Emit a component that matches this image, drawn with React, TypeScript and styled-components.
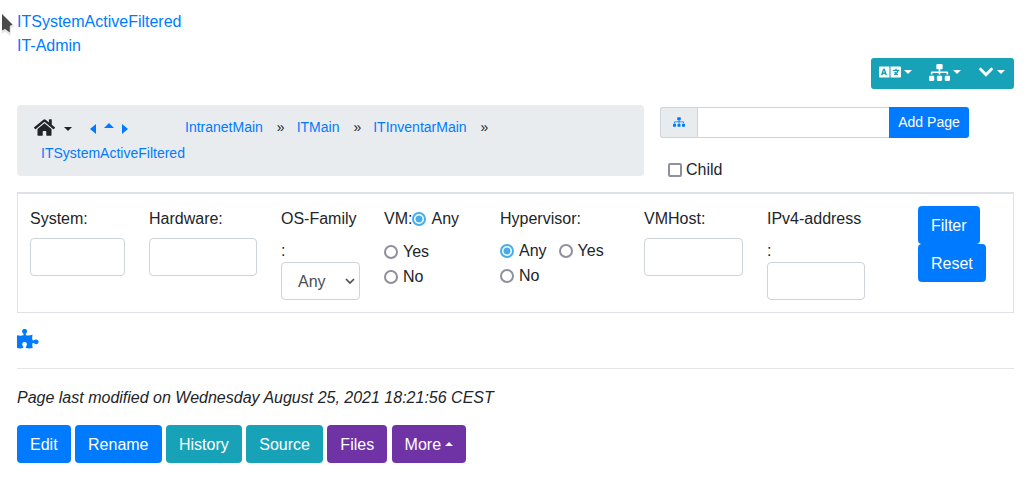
import React from 'react';
import styled, { createGlobalStyle } from 'styled-components';
import { FaChevronDown, FaHome, FaLanguage, FaSitemap } from 'react-icons/fa';

const GlobalStyle = createGlobalStyle`
  *, *::before, *::after { box-sizing: border-box; }
  body {
    margin: 0;
    background: #fff;
    color: #212529;
    font: 16px/24px "Liberation Sans", Arial, sans-serif;
  }
  button, input, select { font: inherit; color: inherit; margin: 0; }
  button { cursor: pointer; }
`;

const Page = styled.main`
  padding: 10px 13px 24px 17px;
`;

const Pointer = styled.svg`
  position: absolute;
  left: 0;
  top: 12px;
  width: 16px;
  height: 24px;
  pointer-events: none;
`;

const Link = styled.a`
  color: #007bff;
  text-decoration: none;
`;

const TitleLinks = styled.nav`
  display: flex;
  flex-direction: column;
  align-items: flex-start;
`;

const Toolbar = styled.div`
  display: flex;
  width: fit-content;
  margin: 0 0 16px auto;
  border-radius: 3px;
  background: #17a2b8;
`;

const ToolButton = styled.button`
  display: flex;
  align-items: center;
  gap: 3px;
  height: 31px;
  padding: 0 9px 3px 8px;
  border: 0;
  background: none;
  color: #fff;
`;

type Direction = 'down' | 'up' | 'left' | 'right';

const caretBorders: Record<Direction, string> = {
  down: 'border-width: 4px 4px 0; border-top-color: currentColor;',
  up: 'border-width: 0 4px 4px; border-bottom-color: currentColor;',
  left: 'border-width: 5px 6px 5px 0; border-right-color: currentColor;',
  right: 'border-width: 5px 0 5px 6px; border-left-color: currentColor;',
};

const Caret = styled.span<{ $dir: Direction }>`
  display: inline-block;
  width: 0;
  height: 0;
  border: 0 solid transparent;
  ${(p) => caretBorders[p.$dir]}
`;

const WideUpCaret = styled(Caret)`
  border-width: 0 5px 5px;
`;

const Header = styled.div`
  display: grid;
  grid-template-columns: 627fr 354fr;
  gap: 16px;
  align-items: start;
  margin-bottom: 10px;
`;

const Breadcrumb = styled.nav`
  padding: 9px 17px 10px;
  border-radius: 4px;
  background: #e9ecef;
  font-size: 14px;
  line-height: 26px;
`;

const Crumbs = styled.ol`
  display: flex;
  flex-wrap: wrap;
  column-gap: 5px;
  margin: 0;
  padding: 0;
  list-style: none;
`;

const Tools = styled.li`
  display: flex;
  align-items: center;
  width: 139px;
  height: 26px;
`;

const HomeButton = styled.button`
  display: flex;
  align-items: center;
  gap: 9px;
  padding: 0;
  border: 0;
  background: none;

  ${Caret} { margin-top: 3px; }
`;

const Arrows = styled.span`
  display: flex;
  align-items: center;
  gap: 8px;
  margin-left: 18px;
`;

const ArrowLink = styled(Link)<{ $raised?: boolean }>`
  display: flex;
  padding: ${(p) => (p.$raised ? '0 0 3px' : '4px 0 0')};
`;

const Crumb = styled.li`
  padding-left: 7px;
`;

const Separator = styled.span`
  margin-left: 14px;
`;

const AddForm = styled.form`
  padding-top: 2px;
`;

const AddGroup = styled.div`
  display: flex;
  width: 309px;
  max-width: 100%;
  height: 31px;
  font-size: 14px;
`;

const Addon = styled.span`
  display: flex;
  align-items: center;
  justify-content: center;
  width: 37px;
  padding-bottom: 2px;
  border: 1px solid #ced4da;
  border-right: 0;
  border-radius: 3px 0 0 3px;
  background: #e9ecef;
  color: #007bff;
`;

const PageName = styled.input`
  flex: 1;
  min-width: 0;
  padding: 0 8px;
  border: 1px solid #ced4da;
  border-right: 0;
  background: #fff;
`;

const AddButton = styled.button`
  width: 80px;
  padding: 0 0 2px;
  border: 0;
  border-radius: 0 3px 3px 0;
  background: #007bff;
  color: #fff;
`;

const ChildLabel = styled.label`
  display: flex;
  align-items: center;
  gap: 4px;
  width: fit-content;
  margin: 20px 0 0 8px;
`;

const Checkbox = styled.input`
  appearance: none;
  width: 14px;
  height: 14px;
  border: 2px solid #8f8f9d;
  border-radius: 2px;
  background: #fff;

  &:checked { border-color: #45aeea; background: #45aeea; }
`;

const FilterForm = styled.form`
  display: grid;
  grid-template-columns: 119fr 132fr 103fr 116fr 144fr 123fr 122fr 136fr;
  border: 1px solid #dee2e6;
  border-top-width: 2px;
`;

const Cell = styled.div`
  min-width: 0;
  padding: 12px;
`;

const FieldLabel = styled.label`
  display: block;
  margin-bottom: 6px;
  line-height: 26px;
`;

const Colon = styled.div`
  height: 24px;
  line-height: 26px;
`;

const Field = styled.input`
  display: block;
  width: 100%;
  height: 38px;
  padding: 6px 12px;
  border: 1px solid #ced4da;
  border-radius: 4px;
  background: #fff;
`;

const SelectWrap = styled.div`
  display: grid;
  align-items: center;

  > * { grid-area: 1 / 1; }

  svg {
    justify-self: end;
    margin-right: 5px;
    pointer-events: none;
  }
`;

const Select = styled.select`
  appearance: none;
  width: 100%;
  height: 38px;
  padding: 2px 16px 0;
  border: 1px solid #ced4da;
  border-radius: 4px;
  background: #fff;
  color: #495057;
`;

const RadioGroup = styled.fieldset`
  margin: 0;
  padding: 0;
  border: 0;
  min-width: 0;
`;

const RadioLegend = styled.legend`
  padding: 0;
  margin-bottom: 6px;
  line-height: 26px;
`;

const RadioRow = styled.div<{ $first?: boolean }>`
  display: flex;
  gap: 12px;
  height: 25px;
  margin-bottom: ${(p) => (p.$first ? '8px' : '0')};
`;

const InlineRadioRow = styled(RadioRow)`
  gap: 0;
  line-height: 26px;
`;

const RadioLabel = styled.label`
  display: flex;
  align-items: center;
  gap: 5px;
  line-height: 24px;
`;

const RadioInput = styled.input`
  appearance: none;
  flex: none;
  width: 14px;
  height: 14px;
  border: 2px solid #8f8f9d;
  border-radius: 50%;
  background: #fff;

  &:checked {
    border-color: #45aeea;
    background: radial-gradient(circle, #45aeea 3px, #fff 4px);
  }
`;

const FilterButtons = styled(Cell)`
  display: flex;
  flex-direction: column;
  align-items: flex-start;
  padding-left: 41px;
`;

type Tone = 'primary' | 'info' | 'purple';

const tones: Record<Tone, string> = {
  primary: '#007bff',
  info: '#17a2b8',
  purple: '#6f33a6',
};

const Button = styled.button<{ $tone: Tone }>`
  height: 38px;
  padding: 2px 13px 0;
  border: 0;
  border-radius: 4px;
  background: ${(p) => tones[p.$tone]};
  color: #fff;

  ${Caret} { margin-left: 4px; vertical-align: 4px; }
`;

const PluginLink = styled(Link)`
  display: flex;
  width: fit-content;
  height: 24px;
  margin-top: 15px;
`;

const Rule = styled.hr`
  height: 1px;
  margin: 16px 0;
  border: 0;
  background: #e5e5e5;
`;

const Modified = styled.p`
  margin: 0 0 14px;
  line-height: 26px;
  font-style: italic;
`;

function PuzzleIcon() {
  return (
    <svg width="22" height="22" viewBox="0 0 22 22" fill="#007bff" aria-hidden="true">
      <path d="M0 7.2 C2 7.8 4.5 7.8 6.3 7.3 C6.9 7.1 6.6 6 6 5.2 C4.2 2.8 5.4 .9 7.6 .9 C9.8 .9 11 2.8 9.3 5.2 C8.7 6 8.4 7.1 9.2 7.3 C11 7.7 13.4 7.6 15.6 6.6 C15.1 8.6 15 10.5 15.5 12.1 C15.8 12.7 16.6 12.5 17.3 12 C19.2 10.7 21.6 11.6 21.6 13.8 C21.6 16 19.2 16.9 17.3 15.5 C16.6 15 15.8 14.9 15.5 15.6 C15.1 17 15.3 18.6 15.8 20 C13.5 20.4 11.4 20.6 9.4 20.1 C8.6 19.8 8.8 18.8 9.3 18.1 C10.6 16.2 9.7 14 7.6 14 C5.5 14 4.6 16.2 5.9 18.1 C6.4 18.8 6.6 19.8 5.8 20.1 C3.8 20.6 2 20.4 0 20 Z" />
    </svg>
  );
}

function Radio({ name, label, checked }: { name: string; label: string; checked?: boolean }) {
  return (
    <RadioLabel>
      <RadioInput type="radio" name={name} value={label} defaultChecked={checked} />
      {label}
    </RadioLabel>
  );
}

function TextField({ id, label, children }: { id: string; label: string; children?: React.ReactNode }) {
  return (
    <Cell>
      <FieldLabel htmlFor={id}>{label}</FieldLabel>
      {children}
      <Field id={id} type="text" />
    </Cell>
  );
}

const trail = ['IntranetMain', 'ITMain', 'ITInventarMain'];

const actions: { label: string; tone: Tone }[] = [
  { label: 'Edit', tone: 'primary' },
  { label: 'Rename', tone: 'primary' },
  { label: 'History', tone: 'info' },
  { label: 'Source', tone: 'info' },
  { label: 'Files', tone: 'purple' },
];

const stop = (e: React.FormEvent) => e.preventDefault();

export default function App() {
  return (
    <Page>
      <GlobalStyle />
      <Pointer viewBox="0 0 16 24" aria-hidden="true">
        <path d="M3 4 L13 14 L10 15 L9.5 22 L5 18.5 L3 20 Z" fill="none" stroke="#000" strokeOpacity=".1" strokeWidth="2" />
        <path d="M2 2 L12.5 12.5 L9.8 14 L9.8 20.5 L5 17 L2 18.5 Z" fill="#4a4a4a" />
      </Pointer>

      <TitleLinks>
        <Link href="#page">ITSystemActiveFiltered</Link>
        <Link href="#admin">IT-Admin</Link>
      </TitleLinks>

      <Toolbar>
        <ToolButton type="button" aria-label="Language">
          <FaLanguage size={22} />
          <Caret $dir="down" />
        </ToolButton>
        <ToolButton type="button" aria-label="Structure">
          <FaSitemap size={21} />
          <Caret $dir="down" />
        </ToolButton>
        <ToolButton type="button" aria-label="More tools">
          <FaChevronDown size={16} stroke="currentColor" strokeWidth={16} />
          <Caret $dir="down" />
        </ToolButton>
      </Toolbar>

      <Header>
        <Breadcrumb aria-label="Breadcrumb">
          <Crumbs>
            <Tools>
              <HomeButton type="button" aria-label="Home">
                <FaHome size={21} />
                <Caret $dir="down" />
              </HomeButton>
              <Arrows>
                <ArrowLink href="#previous" aria-label="Previous page"><Caret $dir="left" /></ArrowLink>
                <ArrowLink href="#parent" aria-label="Parent page" $raised><WideUpCaret $dir="up" /></ArrowLink>
                <ArrowLink href="#next" aria-label="Next page"><Caret $dir="right" /></ArrowLink>
              </Arrows>
            </Tools>
            {trail.map((name) => (
              <Crumb key={name}>
                <Link href={`#${name}`}>{name}</Link>
                <Separator>»</Separator>
              </Crumb>
            ))}
            <Crumb><Link href="#page">ITSystemActiveFiltered</Link></Crumb>
          </Crumbs>
        </Breadcrumb>

        <AddForm onSubmit={stop}>
          <AddGroup>
            <Addon><FaSitemap size={12} /></Addon>
            <PageName type="text" aria-label="Page name" />
            <AddButton type="submit">Add Page</AddButton>
          </AddGroup>
          <ChildLabel>
            <Checkbox type="checkbox" />
            Child
          </ChildLabel>
        </AddForm>
      </Header>

      <FilterForm onSubmit={stop}>
        <TextField id="system" label="System:" />
        <TextField id="hardware" label="Hardware:" />
        <Cell>
          <FieldLabel htmlFor="os">OS-Family</FieldLabel>
          <Colon>:</Colon>
          <SelectWrap>
            <Select id="os" defaultValue="Any">
              <option>Any</option>
            </Select>
            <svg width="10" height="6" viewBox="0 0 10 6" fill="none" stroke="#495057" strokeWidth="1.7" aria-hidden="true">
              <path d="M1 1 L5 5 L9 1" />
            </svg>
          </SelectWrap>
        </Cell>
        <Cell>
          <RadioGroup aria-label="VM">
            <InlineRadioRow $first>
              VM:
              <Radio name="vm" label="Any" checked />
            </InlineRadioRow>
            <RadioRow><Radio name="vm" label="Yes" /></RadioRow>
            <RadioRow><Radio name="vm" label="No" /></RadioRow>
          </RadioGroup>
        </Cell>
        <Cell>
          <RadioGroup>
            <RadioLegend>Hypervisor:</RadioLegend>
            <RadioRow>
              <Radio name="hypervisor" label="Any" checked />
              <Radio name="hypervisor" label="Yes" />
            </RadioRow>
            <RadioRow><Radio name="hypervisor" label="No" /></RadioRow>
          </RadioGroup>
        </Cell>
        <TextField id="vmhost" label="VMHost:" />
        <TextField id="ipv4" label="IPv4-address">
          <Colon>:</Colon>
        </TextField>
        <FilterButtons>
          <Button type="submit" $tone="primary">Filter</Button>
          <Button type="reset" $tone="primary">Reset</Button>
        </FilterButtons>
      </FilterForm>

      <PluginLink href="#plugins" aria-label="Plugins"><PuzzleIcon /></PluginLink>
      <Rule />
      <Modified>Page last modified on Wednesday August 25, 2021 18:21:56 CEST</Modified>
      <div>
        {actions.map((a) => (
          <React.Fragment key={a.label}>
            <Button type="button" $tone={a.tone}>{a.label}</Button>{' '}
          </React.Fragment>
        ))}
        <Button type="button" $tone="purple">More<Caret $dir="up" /></Button>
      </div>
    </Page>
  );
}
